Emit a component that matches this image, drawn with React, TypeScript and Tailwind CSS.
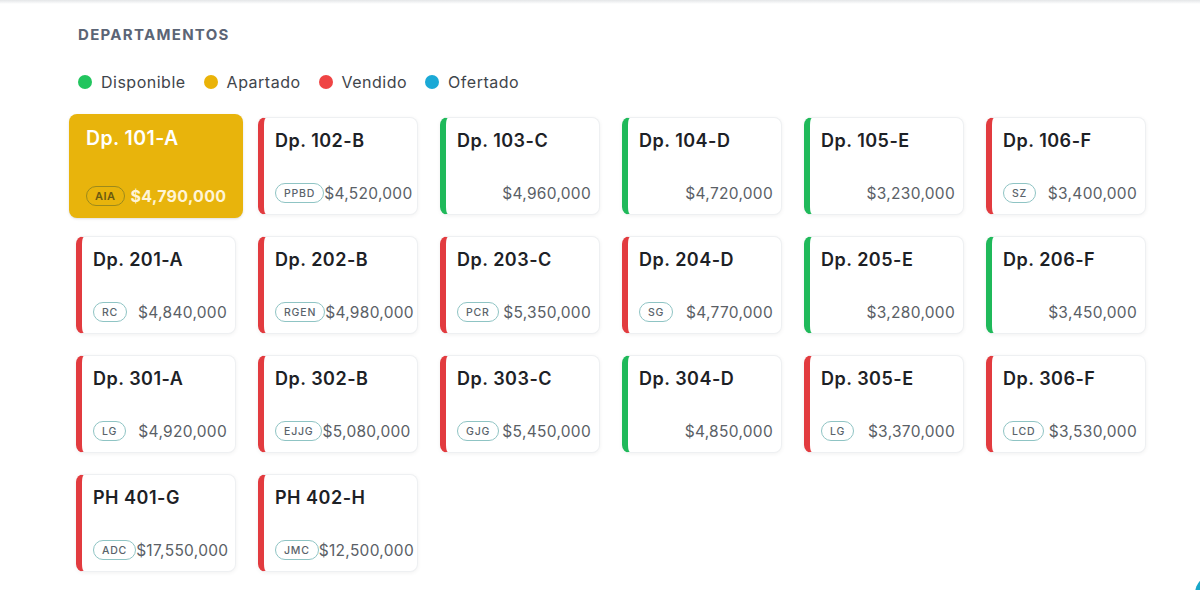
import React from "react";

type Status = "green" | "red" | "yellow";
type Unit = { name: string; price: string; badge?: string; status: Status; selected?: boolean };

const units: Unit[] = [
  { name: "Dp. 101-A", price: "$4,790,000", badge: "AIA", status: "yellow", selected: true },
  { name: "Dp. 102-B", price: "$4,520,000", badge: "PPBD", status: "red" },
  { name: "Dp. 103-C", price: "$4,960,000", status: "green" },
  { name: "Dp. 104-D", price: "$4,720,000", status: "green" },
  { name: "Dp. 105-E", price: "$3,230,000", status: "green" },
  { name: "Dp. 106-F", price: "$3,400,000", badge: "SZ", status: "red" },
  { name: "Dp. 201-A", price: "$4,840,000", badge: "RC", status: "red" },
  { name: "Dp. 202-B", price: "$4,980,000", badge: "RGEN", status: "red" },
  { name: "Dp. 203-C", price: "$5,350,000", badge: "PCR", status: "red" },
  { name: "Dp. 204-D", price: "$4,770,000", badge: "SG", status: "red" },
  { name: "Dp. 205-E", price: "$3,280,000", status: "green" },
  { name: "Dp. 206-F", price: "$3,450,000", status: "green" },
  { name: "Dp. 301-A", price: "$4,920,000", badge: "LG", status: "red" },
  { name: "Dp. 302-B", price: "$5,080,000", badge: "EJJG", status: "red" },
  { name: "Dp. 303-C", price: "$5,450,000", badge: "GJG", status: "red" },
  { name: "Dp. 304-D", price: "$4,850,000", status: "green" },
  { name: "Dp. 305-E", price: "$3,370,000", badge: "LG", status: "red" },
  { name: "Dp. 306-F", price: "$3,530,000", badge: "LCD", status: "red" },
  { name: "PH 401-G", price: "$17,550,000", badge: "ADC", status: "red" },
  { name: "PH 402-H", price: "$12,500,000", badge: "JMC", status: "red" },
];

function Card({ u }: { u: Unit }) {
  if (u.selected) {
    return (
      <div className="-mx-[7px] -my-[3px] rounded-lg bg-[#e8b40c] pl-[17px] pr-[8px] pt-[11px] pb-[10px] flex flex-col justify-between shadow-sm">
        <div className="text-[19.5px] font-semibold text-white tracking-[0.4px] leading-[26px]">{u.name}</div>
        <div className="flex items-center gap-[6px]">
          <span className="rounded-full border-[1.5px] border-[#9c8a1c] px-[8px] h-[20px] flex items-center text-[11px] font-semibold text-[#6b5a10] tracking-[0.5px]">
            {u.badge}
          </span>
          <span className="text-[16px] font-bold text-[#fff4d6] tracking-[0.3px]">{u.price}</span>
        </div>
      </div>
    );
  }
  const bar = u.status === "green" ? "border-l-[#1fb95a]" : "border-l-[#e23b3f]";
  return (
    <div
      className={`rounded-lg bg-white border border-[#eef0f2] border-l-[6px] ${bar} shadow-[0_1px_4px_rgba(0,0,0,0.06)] pl-[11px] pr-[8px] pt-[10px] pb-[9px] flex flex-col justify-between`}
    >
      <div className="text-[18px] font-semibold text-[#1d2126] tracking-[0.5px] leading-[26px]">{u.name}</div>
      <div className={`flex items-center ${u.badge ? "justify-between" : "justify-end"}`}>
        {u.badge && (
          <span className="rounded-full border-[1.5px] border-[#8fc4c4] px-[8px] h-[20px] flex items-center text-[10.5px] font-medium text-[#5a636b] tracking-[0.8px]">
            {u.badge}
          </span>
        )}
        <span className="text-[15.5px] text-[#5a6066] tracking-[0.3px] whitespace-nowrap">{u.price}</span>
      </div>
    </div>
  );
}

export default function App() {
  return (
    <div
      className="relative w-[1200px] h-[590px] bg-white overflow-hidden"
      style={{ fontFamily: "Inter, 'Noto Sans', sans-serif" }}
    >
      <div className="absolute top-0 left-0 right-0 h-[4px] bg-gradient-to-b from-[#e4e6e8] to-white" />
      <div className="pl-[78px] pt-[26px]">
        <h2 className="text-[15px] font-bold text-[#5b6576] tracking-[1.3px] leading-[18px]">DEPARTAMENTOS</h2>
        <div className="mt-[26px] flex items-center gap-[18px] text-[16px] text-[#3f454b] tracking-[0.5px]">
          <div className="flex items-center gap-[9px]">
            <span className="w-[14px] h-[14px] rounded-full bg-[#22c55e]" />
            Disponible
          </div>
          <div className="flex items-center gap-[9px]">
            <span className="w-[14px] h-[14px] rounded-full bg-[#eab308]" />
            Apartado
          </div>
          <div className="flex items-center gap-[9px]">
            <span className="w-[14px] h-[14px] rounded-full bg-[#ef4444]" />
            Vendido
          </div>
          <div className="flex items-center gap-[9px]">
            <span className="w-[14px] h-[14px] rounded-full bg-[#1ba9d6]" />
            Ofertado
          </div>
        </div>
      </div>
      <div className="ml-[76px] mt-[23px] grid grid-cols-[repeat(6,160px)] auto-rows-[98px] gap-x-[22px] gap-y-[21px]">
        {units.map((u) => (
          <Card key={u.name} u={u} />
        ))}
      </div>
      <div className="absolute left-[1195px] top-[574px] w-[40px] h-[40px] rounded-full bg-[#18a7c9]" />
    </div>
  );
}
